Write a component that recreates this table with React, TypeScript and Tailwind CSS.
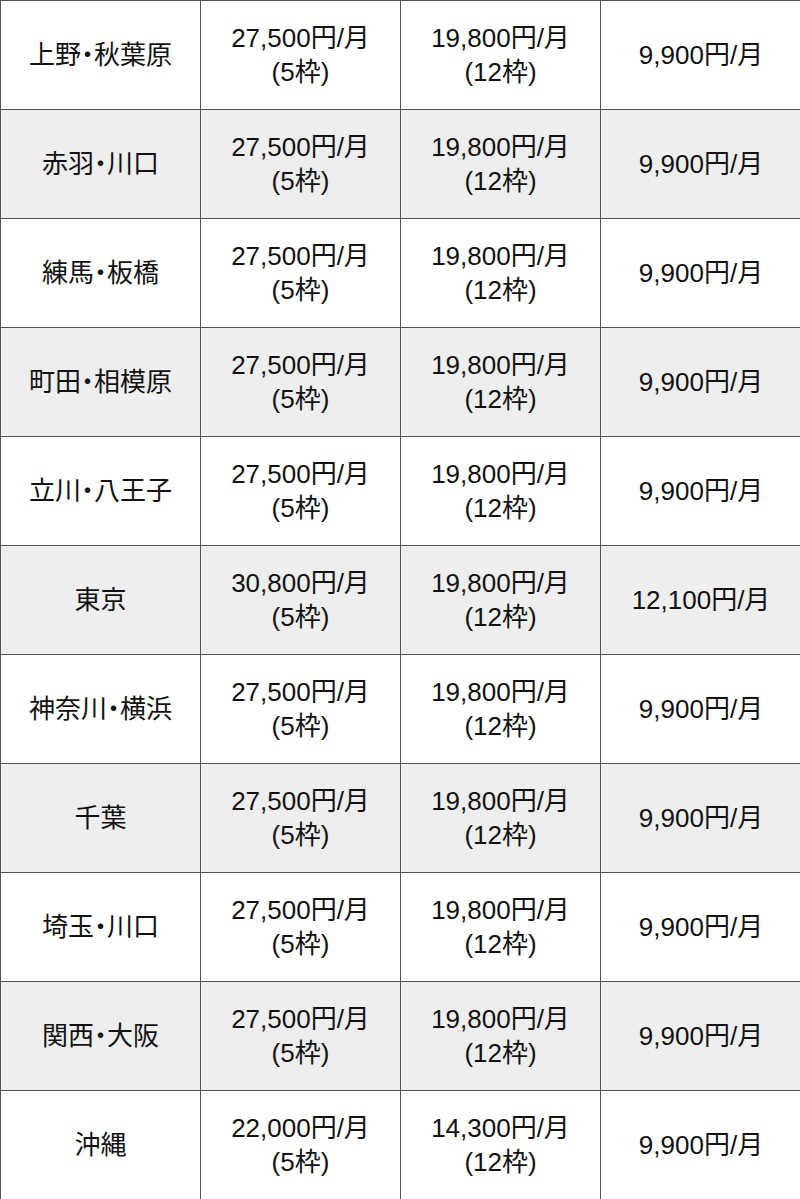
const rows = [
  { area: "上野・秋葉原", a: "27,500円/月", b: "19,800円/月", c: "9,900円/月" },
  { area: "赤羽・川口", a: "27,500円/月", b: "19,800円/月", c: "9,900円/月" },
  { area: "練馬・板橋", a: "27,500円/月", b: "19,800円/月", c: "9,900円/月" },
  { area: "町田・相模原", a: "27,500円/月", b: "19,800円/月", c: "9,900円/月" },
  { area: "立川・八王子", a: "27,500円/月", b: "19,800円/月", c: "9,900円/月" },
  { area: "東京", a: "30,800円/月", b: "19,800円/月", c: "12,100円/月" },
  { area: "神奈川・横浜", a: "27,500円/月", b: "19,800円/月", c: "9,900円/月" },
  { area: "千葉", a: "27,500円/月", b: "19,800円/月", c: "9,900円/月" },
  { area: "埼玉・川口", a: "27,500円/月", b: "19,800円/月", c: "9,900円/月" },
  { area: "関西・大阪", a: "27,500円/月", b: "19,800円/月", c: "9,900円/月" },
  { area: "沖縄", a: "22,000円/月", b: "14,300円/月", c: "9,900円/月" },
];

function Cell({ children }: { children: React.ReactNode }) {
  return (
    <div className="flex h-[109px] items-center justify-center border-t border-l border-[#555] text-center">
      {children}
    </div>
  );
}

export default function App() {
  return (
    <div
      className="w-[800px] overflow-hidden bg-white text-[26px] leading-[34px] text-[#111]"
      style={{ fontFamily: '"Liberation Sans", "Noto Sans CJK JP", sans-serif', fontFeatureSettings: '"palt"' }}
    >
      {rows.map((r, i) => (
        <div
          key={r.area}
          className={`grid grid-cols-[200px_200px_200px_201px] ${i % 2 === 1 ? "bg-[#eeeeee]" : "bg-white"}`}
        >
          <Cell>{r.area}</Cell>
          <Cell>
            <div>
              <div>{r.a}</div>
              <div>(5枠)</div>
            </div>
          </Cell>
          <Cell>
            <div>
              <div>{r.b}</div>
              <div>(12枠)</div>
            </div>
          </Cell>
          <Cell>{r.c}</Cell>
        </div>
      ))}
    </div>
  );
}
